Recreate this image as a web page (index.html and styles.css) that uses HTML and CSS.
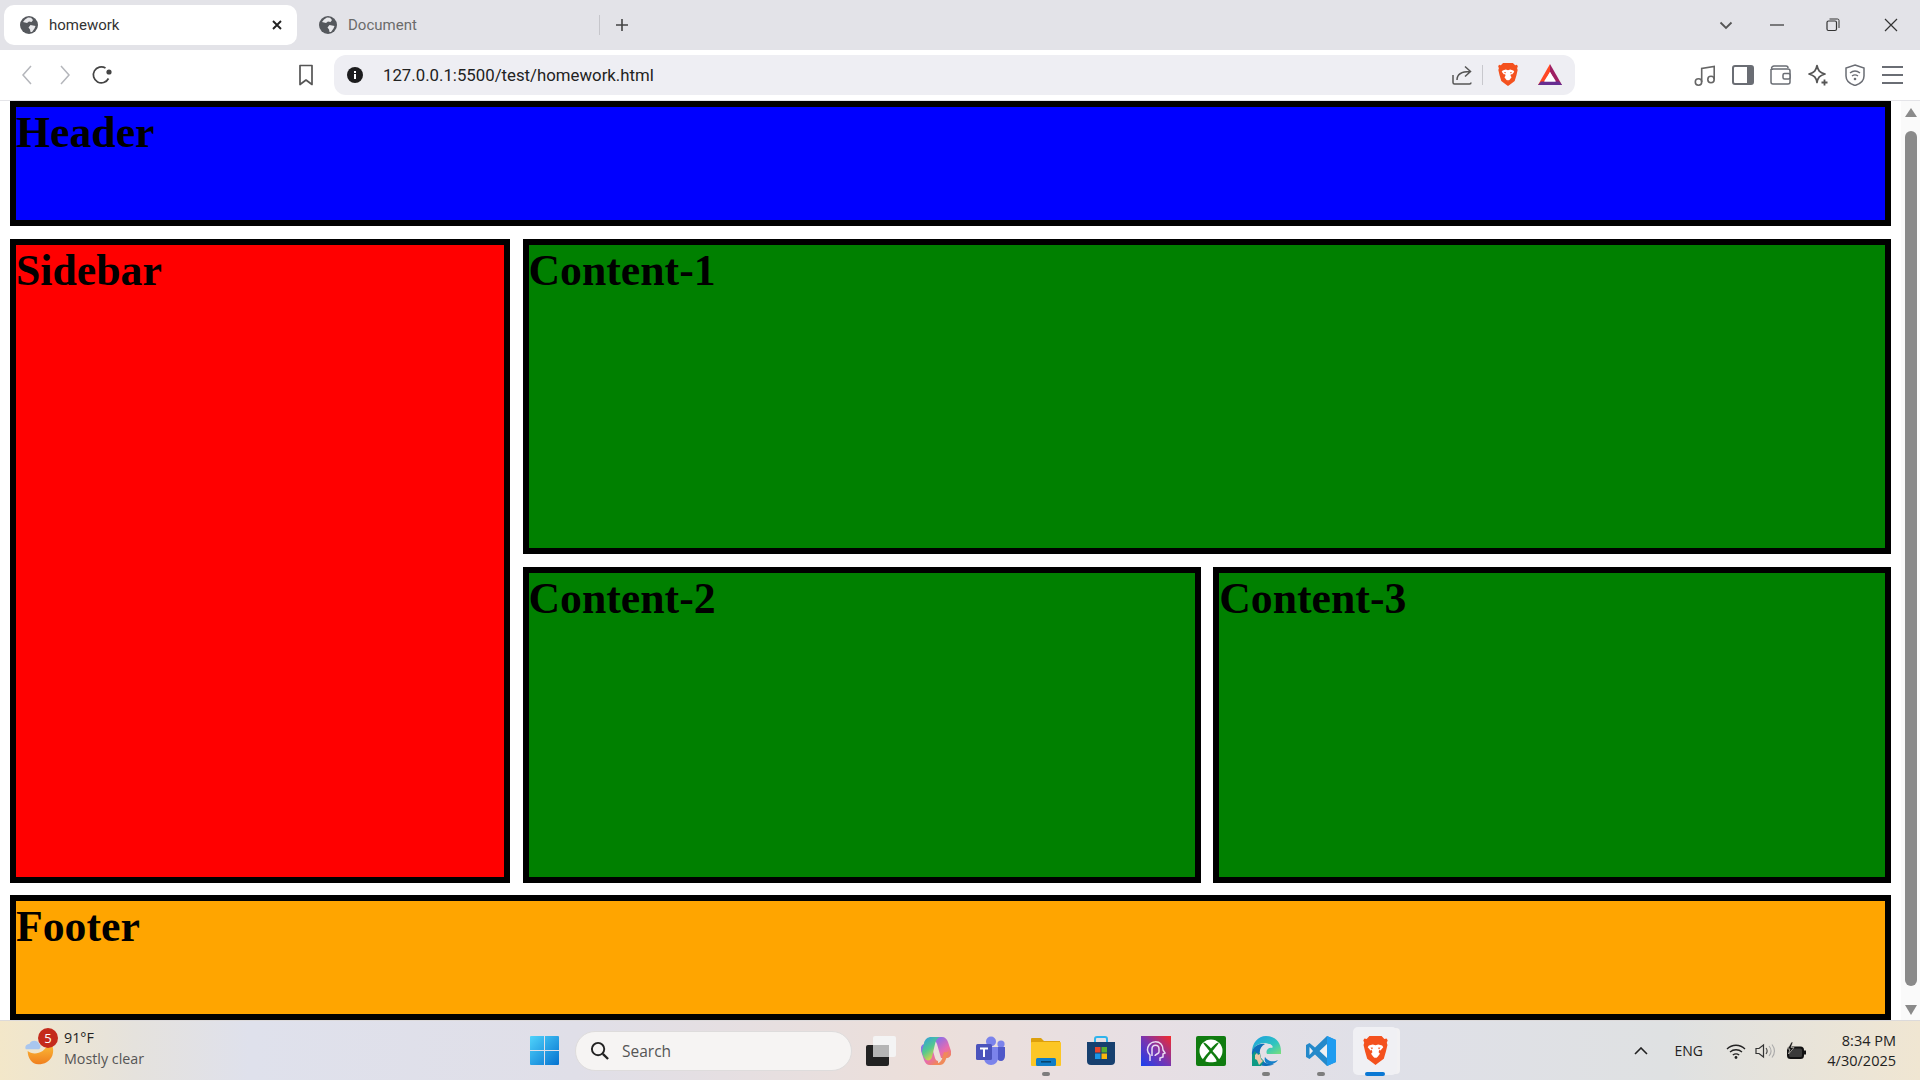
FILE: index.html
```html
<!DOCTYPE html>
<html lang="en">
<head>
<meta charset="utf-8">
<title>homework</title>
<link rel="stylesheet" href="styles.css">
</head>
<body>
<svg class="defs" width="0" height="0" aria-hidden="true">
  <defs>
    <symbol id="globe" viewBox="0 0 18 18">
      <circle cx="9" cy="9" r="9" fill="#55585d"/>
      <path d="M8 1.500 11 1.800 13 4 11.500 6 9 5.500 7 7 5 6.500 3 6 5 3.500Z M10.500 9 15.500 10 14.500 12.500 12 16 10.500 16 10 13.500 8.500 11.500Z" fill="#e9e9ec"/>
    </symbol>
    <symbol id="brave" viewBox="0 0 24 28">
      <path d="M6.500 1h11l2.500 2.500 2-.3 1 1.600-.8 2.200.6 2-1.400 6-1.900 6.400-5.500 4.200-2 1.400-2-1.400-5.500-4.200L2.600 15 1.200 9l.6-2L1 4.800l1-1.600 2 .3Z" fill="#f4511e"/>
      <path d="M6 9.500 9.500 8.500 12 9.200 14.500 8.500 18 9.500 19 11 16.500 14 15.300 13.500 14.800 15.500 16 17 14.500 19 12 22 9.500 19 8 17 9.200 15.500 8.700 13.500 7.500 14 5 11Z" fill="#fff"/>
      <path d="M10 20.500h4l-2 2.500Z M7.500 11.300l2.300.3-1 1.400Z M16.500 11.300l-2.300.3 1 1.400Z" fill="#f4511e"/>
    </symbol>
  </defs>
</svg>

<div class="tabstrip">
  <div class="tab tab-active">
    <svg class="favicon"><use href="#globe"/></svg>
    <span class="tab-title">homework</span>
    <svg class="tab-close" viewBox="0 0 12 12"><path d="M2 2l8 8M10 2l-8 8" stroke="#222" stroke-width="1.900" fill="none"/></svg>
  </div>
  <div class="tab tab-idle">
    <svg class="favicon"><use href="#globe"/></svg>
    <span class="tab-title tab-title-idle">Document</span>
  </div>
  <span class="tab-sep"></span>
  <svg class="new-tab" viewBox="0 0 16 16"><path d="M8 2v12M2 8h12" stroke="#444" stroke-width="1.600" fill="none"/></svg>
  <div class="win-controls">
    <svg class="win-ico win-chev" viewBox="0 0 14 14"><path d="M1.500 4.500 7 10l5.500-5.500" stroke="#555" stroke-width="1.800" fill="none"/></svg>
    <svg class="win-ico win-min" viewBox="0 0 14 14"><path d="M0 7h14" stroke="#333" stroke-width="1.200"/></svg>
    <svg class="win-ico win-max" viewBox="0 0 14 14"><rect x="1" y="3" width="9.500" height="9.500" rx="1.500" fill="none" stroke="#333" stroke-width="1.200"/><path d="M3.500 1h8A1.500 1.500 0 0 1 13 2.500V10" fill="none" stroke="#333" stroke-width="1"/></svg>
    <svg class="win-ico win-close" viewBox="0 0 14 14"><path d="M1 1l12 12M13 1 1 13" stroke="#333" stroke-width="1.200"/></svg>
  </div>
</div>

<div class="toolbar">
  <svg class="tool nav-back" viewBox="0 0 14 22"><path d="M11 2 3 11l8 9" stroke="#b4b6bb" stroke-width="1.500" fill="none"/></svg>
  <svg class="tool nav-fwd" viewBox="0 0 14 22"><path d="M3 2l8 9-8 9" stroke="#b4b6bb" stroke-width="1.500" fill="none"/></svg>
  <svg class="tool nav-reload" viewBox="0 0 22 22"><path d="M17.500 14.500A8 8 0 1 1 14.500 4" stroke="#444" stroke-width="1.700" fill="none"/><circle cx="18" cy="8" r="2.600" fill="#444"/></svg>
  <svg class="tool nav-mark" viewBox="0 0 16 22"><path d="M2 1.500h12v19l-6-4.500-6 4.500Z" stroke="#555" stroke-width="1.700" fill="none" stroke-linejoin="round"/></svg>
  <div class="urlbar">
    <svg class="url-info" viewBox="0 0 16 16"><circle cx="8" cy="8" r="8" fill="#1c1c1e"/><rect x="7" y="7" width="2" height="5" fill="#fff"/><rect x="7" y="4" width="2" height="2" fill="#fff"/></svg>
    <span class="url-text">127.0.0.1:5500/test/homework.html</span>
    <svg class="url-share" viewBox="0 0 20 20"><path d="M1 10v7.500a1.500 1.500 0 0 0 1.500 1.500h15a1.500 1.500 0 0 0 1.500-1.500" stroke="#555" stroke-width="1.500" fill="none"/><path d="M5 15c0-6 4-8.500 13-8.500M13 1.500l5.500 5-5.500 5" stroke="#555" stroke-width="1.500" fill="none"/></svg>
    <span class="url-sep"></span>
    <svg class="url-brave"><use href="#brave"/></svg>
    <svg class="url-bat" viewBox="0 0 24 21"><path d="M12 0 0 21h5L12 8Z" fill="#ff4724"/><path d="M12 0v8l7 13h5Z" fill="#9e1f63"/><path d="M0 21l3-3.500h18l3 3.500Z" fill="#662d91"/><path d="M12 8 6 17.500h12Z" fill="#fff"/></svg>
  </div>
  <div class="tool-right">
    <svg class="tr-ico" viewBox="0 0 22 22"><circle cx="4.500" cy="18" r="3.200" fill="none" stroke="#666" stroke-width="1.600"/><circle cx="17" cy="15.500" r="3.200" fill="none" stroke="#666" stroke-width="1.600"/><path d="M7.700 18V4.500L20.200 2.500v13" fill="none" stroke="#666" stroke-width="1.600"/></svg>
    <svg class="tr-ico" viewBox="0 0 22 22"><rect x="1" y="2" width="20" height="18" rx="2" fill="#fff" stroke="#6a6d74" stroke-width="2"/><path d="M15 2h4a2 2 0 0 1 2 2v14a2 2 0 0 1-2 2h-4Z" fill="#6a6d74"/></svg>
    <svg class="tr-ico" viewBox="0 0 22 22"><path d="M2.500 4.500A2.500 2.500 0 0 1 5 2h12a2 2 0 0 1 2 2M2 5v13a2 2 0 0 0 2 2h15a2 2 0 0 0 2-2V7a2 2 0 0 0-2-2H4a2 2 0 0 1-2 0" fill="none" stroke="#6a6d74" stroke-width="1.500"/><rect x="14" y="9.500" width="7" height="5.500" rx="1.500" fill="#fff" stroke="#6a6d74" stroke-width="1.500"/></svg>
    <svg class="tr-ico" viewBox="0 0 22 22"><path d="M10 1.500c1 5 2.500 7 8 8.500-5.500 1.500-7 3.500-8 8.500-1-5-2.500-7-8-8.500 5.500-1.500 7-3.500 8-8.500Z" fill="none" stroke="#555" stroke-width="1.700" stroke-linejoin="round"/><path d="M17.500 15.500v6M14.500 18.500h6" stroke="#555" stroke-width="1.800"/></svg>
    <svg class="tr-ico" viewBox="0 0 22 22"><path d="M11 1 20 4v8c0 5-4 8-9 9.500C6 20 2 17 2 12V4Z" fill="none" stroke="#6a6d74" stroke-width="1.500"/><path d="M6 9c3-2.500 7-2.500 10 0M8 12c2-1.500 4-1.500 6 0" fill="none" stroke="#6a6d74" stroke-width="1.400"/><circle cx="11" cy="15" r="1.300" fill="#6a6d74"/></svg>
    <svg class="tr-ico" viewBox="0 0 22 22"><path d="M0 3h21M0 11h21M0 19h21" stroke="#6a6d74" stroke-width="1.800"/></svg>
  </div>
</div>

<div class="viewport">
  <main class="page">
    <section class="box box-blue box-wide"><h1 class="box-title">Header</h1></section>
    <section class="box box-red box-side"><h1 class="box-title">Sidebar</h1></section>
    <section class="box box-green box-c1"><h1 class="box-title">Content-1</h1></section>
    <section class="box box-green"><h1 class="box-title">Content-2</h1></section>
    <section class="box box-green"><h1 class="box-title">Content-3</h1></section>
    <section class="box box-orange box-wide"><h1 class="box-title">Footer</h1></section>
  </main>
  <div class="scrollbar">
    <span class="sb-arrow sb-up"></span>
    <span class="sb-thumb"></span>
    <span class="sb-arrow sb-down"></span>
  </div>
</div>

<footer class="taskbar">
  <div class="weather">
    <svg class="weather-ico" viewBox="0 0 34 34">
      <defs><linearGradient id="moon" x1="0" y1="0" x2="0" y2="1"><stop offset="0" stop-color="#fcc23a"/><stop offset="1" stop-color="#f07f1e"/></linearGradient></defs>
      <path d="M3 17c6 5 19 4 24-10 5 3 6 9 4 15-3 7-9 10-16 10C8 32 3 25 3 17Z" fill="url(#moon)"/>
      <path d="M1 15a4 4 0 0 1 4-6 6 6 0 0 1 11 0 3.500 3.500 0 0 1 0 6Z" fill="#a9c6ee"/>
    </svg>
    <span class="weather-badge">5</span>
    <div class="weather-text">
      <span class="weather-temp">91°F</span>
      <span class="weather-desc">Mostly clear</span>
    </div>
  </div>
  <div class="task-center">
    <span class="task-slot">
      <svg class="task-ico win-logo" viewBox="0 0 29 29">
        <defs><linearGradient id="winb" x1="0" y1="0" x2="1" y2="1"><stop offset="0" stop-color="#4fd3fb"/><stop offset="1" stop-color="#0572d0"/></linearGradient></defs>
        <path d="M1 0h13v14H0V1a1 1 0 0 1 1-1ZM15 0h13a1 1 0 0 1 1 1v13H15ZM0 15h14v14H1a1 1 0 0 1-1-1ZM15 15h14v13a1 1 0 0 1-1 1H15Z" fill="url(#winb)"/>
      </svg>
    </span>
    <div class="search">
      <svg class="search-ico" viewBox="0 0 20 20"><circle cx="8.500" cy="8.500" r="6.500" fill="none" stroke="#222" stroke-width="2"/><path d="M13.500 13.500 19 19" stroke="#222" stroke-width="2.400"/></svg>
      <span class="search-text">Search</span>
    </div>
    <span class="task-slot">
      <svg class="task-ico" viewBox="0 0 30 30"><rect x="0" y="9" width="23" height="21" rx="2" fill="#222"/><rect x="7" y="0" width="23" height="21" rx="2" fill="#f4f4f4"/><rect x="7" y="9" width="16" height="12" fill="#b5b5b5"/></svg>
    </span>
    <span class="task-slot">
      <svg class="task-ico" viewBox="0 0 30 30">
        <defs>
          <linearGradient id="cop1" x1="0" y1="0" x2=".6" y2="1"><stop offset="0" stop-color="#2e9be6"/><stop offset=".55" stop-color="#55c98d"/><stop offset="1" stop-color="#f3d23c"/></linearGradient>
          <linearGradient id="cop2" x1=".3" y1="0" x2="1" y2="1"><stop offset="0" stop-color="#8a70e8"/><stop offset=".55" stop-color="#e76bb0"/><stop offset="1" stop-color="#f28a4a"/></linearGradient>
        </defs>
        <path d="M13 1h8c3 0 5 2 6 5l3 9c1 4-1 7-4 7h-6L16 8c-.5-2-2-3-3-3Z" fill="url(#cop2)"/>
        <path d="M17 29H9c-3 0-5-2-6-5L0 15c-1-4 1-7 4-7h6l4 14c.5 2 2 3 3 3Z" fill="url(#cop2)"/>
        <path d="M10 1h9c-3 1-4 3-5 7l-3 13c-1 3-3 4-6 3-2-2-4-5-4-9l2-8c1-4 4-6 7-6Z" fill="url(#cop1)"/>
        <path d="M11 29h8c3 0 5-3 6-6l3-8c-1 1-3 2-5 1l-2 7c-1 3-4 5-10 6Z" fill="#f08a5a"/>
      </svg>
    </span>
    <span class="task-slot">
      <svg class="task-ico" viewBox="0 0 30 30"><circle cx="25" cy="8" r="3.600" fill="#7b83eb"/><circle cx="15" cy="5.500" r="5" fill="#7b83eb"/><path d="M21 11h8v9c0 3-2 5-4 5-3 0-4-2-4-4Z" fill="#5059c9"/><path d="M8 11h14v11c0 4-3 7-7 7s-7-3-7-7Z" fill="#7b83eb"/><rect x="0" y="8" width="16" height="16" rx="1.500" fill="#4b53bc"/><path d="M4 11.500h8v2H9v7.500H7v-7.500H4Z" fill="#fff"/></svg>
    </span>
    <span class="task-slot">
      <svg class="task-ico" viewBox="0 0 30 30"><path d="M0 3a1 1 0 0 1 1-1h9l3 3h16v5H0Z" fill="#dda00c"/><rect x="0" y="6" width="30" height="24" rx="1" fill="#fcc625"/><rect x="5" y="22" width="20" height="8" rx="1.500" fill="#0f7dc8"/><rect x="10" y="25" width="10" height="1.600" fill="#06456f"/></svg>
      <i class="task-dot"></i>
    </span>
    <span class="task-slot">
      <svg class="task-ico" viewBox="0 0 30 30"><path d="M9 6V3a2 2 0 0 1 2-2h8a2 2 0 0 1 2 2v3" fill="none" stroke="#2fb4ec" stroke-width="2"/><path d="M1 6h28v19a4 4 0 0 1-4 4H5a4 4 0 0 1-4-4Z" fill="#17406f"/><rect x="9" y="11" width="5.500" height="5.500" fill="#e8452c"/><rect x="15.500" y="11" width="5.500" height="5.500" fill="#5ab030"/><rect x="9" y="17.500" width="5.500" height="5.500" fill="#1996e8"/><rect x="15.500" y="17.500" width="5.500" height="5.500" fill="#fbb70e"/></svg>
    </span>
    <span class="task-slot">
      <svg class="task-ico" viewBox="0 0 30 30">
        <defs><linearGradient id="app" x1="0" y1="1" x2="1" y2="0"><stop offset="0" stop-color="#1740f0"/><stop offset=".5" stop-color="#7a35b0"/><stop offset="1" stop-color="#f52a2a"/></linearGradient></defs>
        <rect width="30" height="30" fill="url(#app)"/>
        <path d="M9 25v-6c-3-3-3-7-1-10 3-4 9-4 12-1 2 2 2 4 2 6l2 3-2 1v3l-3 1v3" fill="none" stroke="#e9dcf4" stroke-width="1.500"/>
        <path d="M11 20V13c0-5 7-5 7 0v3c0 2-4 2-4 4" fill="none" stroke="#e9dcf4" stroke-width="1.500"/>
      </svg>
    </span>
    <span class="task-slot">
      <svg class="task-ico" viewBox="0 0 30 30"><rect width="30" height="30" rx="2" fill="#107c10"/><circle cx="15" cy="15" r="11.500" fill="#fff"/><path d="M15 12.500C12 9 8.500 6 7.500 6.500c-1 .5 4 6 6 8.500C9 20 4 26 6 27h18c2-1-3-7-7.500-12 2-2.500 7-8 6-8.500-1-.5-4.500 2.500-7.500 6Z" fill="#107c10"/><path d="M15 17c-3 3.500-6 7-5.500 8.500C11 26.500 19 26.500 20.500 25.500 21 24 18 20.500 15 17Z" fill="#fff"/></svg>
    </span>
    <span class="task-slot">
      <svg class="task-ico" viewBox="0 0 30 30">
        <defs><linearGradient id="edge" x1="0" y1="0" x2="1" y2="1"><stop offset="0" stop-color="#1b9de2"/><stop offset=".6" stop-color="#2fc4c0"/><stop offset="1" stop-color="#7ce07a"/></linearGradient></defs>
        <path d="M15 0c9 0 15 6 15 15v3H16c-2-4 2-7 5-6 2-2-1-4-3-4C11 5 3 9 1 16 1 7 7 0 15 0Z" fill="url(#edge)"/>
        <path d="M1 16c1-6 8-9 13-8-4 2-6 6-5 11 1 6 6 10 14 9-3 2-6 2-9 2C7 30 0 24 1 16Z" fill="#0d6fb8"/>
        <path d="M14 21c3 5 9 5 13 3-2 3-6 5-10 4-3-1-4-4-3-7Z" fill="#1680c9"/>
        <path d="M1 30V19l3-4 2 3 3-1 1 5 3 3-3 5Z" fill="#0f9a84"/>
        <path d="M4 19l2-2 1 2 2-1 1 5 2 2-4 4-2-5-2-1Z" fill="#ecc7a8"/>
      </svg>
      <i class="task-dot"></i>
    </span>
    <span class="task-slot">
      <svg class="task-ico" viewBox="0 0 30 30"><path d="M21 0 30 4v22l-9 4L9 18.500 3.500 23 0 21V9l3.500-2L9 11.500Z" fill="#2489ca"/><path d="M21 0 30 4v22l-9 4Z" fill="#1f9cf0"/><path d="M21 8v14l-7.500-7Z M3.500 11 7 15 3.500 19Z" fill="#eef0f3"/></svg>
      <i class="task-dot"></i>
    </span>
    <span class="task-slot task-slot-active">
      <svg class="task-ico task-brave"><use href="#brave"/></svg>
      <i class="task-dot task-dot-active"></i>
    </span>
  </div>
  <div class="tray">
    <svg class="tray-chev" viewBox="0 0 14 8"><path d="M1 7l6-6 6 6" fill="none" stroke="#222" stroke-width="1.600"/></svg>
    <span class="tray-lang">ENG</span>
    <svg class="tray-wifi" viewBox="0 0 20 16"><path d="M1 6c5-5 13-5 18 0M4 9c3.500-3 8.500-3 12 0M6.800 12c2-1.500 4.400-1.500 6.400 0" fill="none" stroke="#222" stroke-width="1.300"/><circle cx="10" cy="14.500" r="1.400" fill="#222"/></svg>
    <svg class="tray-vol" viewBox="0 0 20 16"><path d="M1 5.500h3L8.500 2v12L4 10.500H1Z" fill="none" stroke="#333" stroke-width="1.200"/><path d="M11 5c1.500 2 1.500 4 0 6" fill="none" stroke="#444" stroke-width="1.100"/><path d="M14 3c2.500 3 2.500 7 0 10M17 1.500c3 4 3 9 0 13" fill="none" stroke="#aaa" stroke-width="1.100"/></svg>
    <svg class="tray-bat" viewBox="0 0 20 18"><rect x="2" y="5.500" width="15" height="10.500" rx="2.500" fill="#3a3a3a" stroke="#111" stroke-width="2"/><rect x="17.500" y="8.500" width="2.500" height="4" fill="#111"/><path d="M5.500 0 1.500 7h2.500L2.500 12 8 5.500H5L7 0Z" fill="#111" stroke="#e8e3da" stroke-width=".6"/></svg>
    <div class="clock">
      <span>8:34 PM</span>
      <span>4/30/2025</span>
    </div>
  </div>
</footer>
</body>
</html>
```

FILE: styles.css
```css
* { box-sizing: border-box; }
html, body { margin: 0; padding: 0; height: 100%; overflow: hidden; background: #fff; }
body { display: flex; flex-direction: column; height: 1080px; font-family: "Open Sans", "Noto Sans", sans-serif; }
.defs { position: absolute; }

/* tab strip */
.tabstrip { height: 50px; background: #e3e3e8; display: flex; align-items: center; padding-left: 4px; flex: none; }
.tab { height: 40px; display: flex; align-items: center; }
.tab-active { width: 293px; background: #fff; border-radius: 10px; padding-left: 16px; }
.tab-idle { width: 299px; padding-left: 22px; }
.favicon { width: 18px; height: 18px; flex: none; }
.tab-title { margin-left: 11px; font-family: "Roboto", sans-serif; font-size: 15px; color: #333; flex: 1; }
.tab-title-idle { margin-left: 11px; color: #6b6b6b; }
.tab-close { width: 12px; height: 12px; margin-right: 14px; flex: none; }
.tab-sep { width: 1px; height: 20px; background: #c6c6cb; flex: none; margin-left: 3px; }
.new-tab { width: 16px; height: 16px; margin-left: 14px; flex: none; }
.win-controls { margin-left: auto; display: flex; align-items: center; height: 100%; }
.win-ico { width: 14px; height: 14px; flex: none; }
.win-chev { margin-right: 37px; }
.win-min { margin-right: 42px; }
.win-max { margin-right: 44px; }
.win-close { margin-right: 22px; }

/* toolbar */
.toolbar { height: 51px; flex: none; display: flex; align-items: center; border-bottom: 1px solid #e4e4e8; background: #fff; padding-bottom: 1px; }
.tool { flex: none; height: 22px; }
.nav-back { width: 14px; margin-left: 20px; }
.nav-fwd { width: 14px; margin-left: 24px; }
.nav-reload { width: 22px; margin-left: 19px; }
.nav-mark { width: 16px; margin-left: 185px; }
.urlbar { width: 1241px; height: 40px; margin-left: 20px; background: #eeeef3; border-radius: 12px; display: flex; align-items: center; padding-left: 13px; flex: none; }
.url-info { width: 16px; height: 16px; flex: none; }
.url-text { margin-left: 20px; font-family: "Roboto", sans-serif; font-size: 16.800px; color: #222; white-space: nowrap; }
.url-share { width: 20px; height: 20px; margin-left: auto; flex: none; }
.url-sep { width: 1px; height: 20px; background: #c8c8cd; margin-left: 10px; flex: none; }
.url-brave { width: 22px; height: 25px; margin-left: 14px; flex: none; }
.url-bat { width: 24px; height: 21px; margin-left: 19px; margin-right: 13px; flex: none; }
.tool-right { margin-left: 119px; display: flex; align-items: center; gap: 15.500px; }
.tr-ico { width: 22px; height: 22px; flex: none; }

/* page */
.viewport { height: 919px; flex: none; display: flex; background: #fff; overflow: hidden; }
.page { width: 1901px; flex: none; padding-left: 10px; display: grid; grid-template-columns: 500px 678.250px 678px; grid-template-rows: 125px 315.500px 316px 125px; gap: 12.500px; align-content: start; justify-content: start; }
.box { border: 6px solid #000; min-width: 0; }
.box-wide { grid-column: 1 / -1; }
.box-side { grid-row: span 2; }
.box-c1 { grid-column: span 2; }
.box-blue { background: #00f; }
.box-red { background: #f00; }
.box-green { background: #008000; }
.box-orange { background: #ffa500; }
.box-title { margin: 0; font-family: "Liberation Serif", serif; font-weight: 700; font-size: 43.750px; line-height: 50px; color: #000; }

/* scrollbar */
.scrollbar { width: 19px; flex: none; background: #fafafa; display: flex; flex-direction: column; align-items: center; padding: 7px 0 5px; }
.sb-arrow { width: 0; height: 0; border-left: 6.500px solid transparent; border-right: 6.500px solid transparent; flex: none; }
.sb-up { border-bottom: 9px solid #8a8a8a; }
.sb-down { border-top: 10px solid #8a8a8a; margin-top: auto; }
.sb-thumb { width: 12px; height: 855px; margin-top: 14px; background: #8a8a8a; border-radius: 6px; flex: none; }

/* taskbar */
.taskbar { height: 60px; flex: none; display: flex; align-items: center; position: relative; border-top: 1px solid #dcdadb; background: linear-gradient(90deg, #f3e7c9 0%, #e5e2dd 7%, #dfe1ec 13%, #e0dfe8 30%, #ecdfda 48%, #e7dfe4 60%, #dfe0e8 72%, #dfe1e2 87%, #f0e6d2 100%); }
.weather { width: 517px; display: flex; align-items: center; padding-left: 25px; flex: none; position: relative; }
.weather-ico { width: 30px; height: 34px; flex: none; }
.weather-badge { position: absolute; left: 38px; top: -4px; width: 20px; height: 20px; border-radius: 50%; background: #c42b1c; color: #fff; font-size: 13px; line-height: 20px; text-align: center; }
.weather-text { display: flex; flex-direction: column; margin-left: 9px; line-height: 21px; margin-top: -5px; }
.weather-temp { font-size: 14.300px; color: #222; }
.weather-desc { font-size: 14.300px; color: #555; }
.task-center { display: flex; align-items: center; flex: none; }
.task-slot { width: 55px; height: 48px; display: flex; align-items: center; justify-content: center; position: relative; flex: none; }
.task-ico { width: 30px; height: 30px; flex: none; }
.win-logo { width: 29px; height: 29px; }
.task-brave { width: 27px; height: 31px; }
.task-slot-active { width: 44px; margin-left: 5px; background: #f0f0f4; border-radius: 5px; box-shadow: 4px 0 0 -1px #f2f1f3; }
.task-dot { position: absolute; bottom: -1px; left: 50%; width: 8px; height: 4px; margin-left: -4px; border-radius: 2px; background: #7d7d7d; }
.task-dot-active { width: 20px; margin-left: -10px; background: #0a78d4; }
.search { width: 277px; height: 40px; margin-left: 3px; margin-right: 1px; border-radius: 20px; background: #f6f4f3; border: 1px solid #dedcdc; display: flex; align-items: center; padding-left: 14px; flex: none; }
.search-ico { width: 19px; height: 19px; flex: none; }
.search-text { margin-left: 13px; font-size: 15.500px; color: #555; }
.tray { margin-left: auto; display: flex; align-items: center; padding-right: 24px; }
.tray-chev { width: 14px; height: 8px; flex: none; }
.tray-lang { margin-left: 27px; font-size: 14px; color: #222; }
.tray-wifi { width: 20px; height: 16px; margin-left: 23px; flex: none; }
.tray-vol { width: 20px; height: 16px; margin-left: 9px; flex: none; }
.tray-bat { width: 20px; height: 18px; margin-left: 11px; flex: none; }
.clock { width: 90px; margin-left: 0; display: flex; flex-direction: column; align-items: flex-end; font-size: 14.500px; line-height: 20px; color: #222; }
```
